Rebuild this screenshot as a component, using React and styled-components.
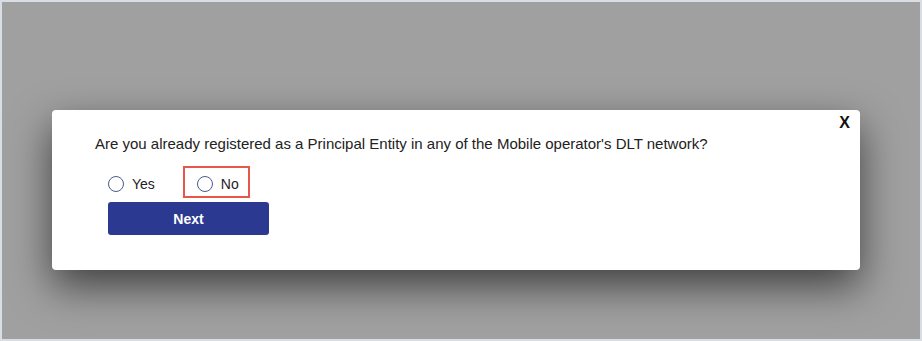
import React from 'react'
import styled, { createGlobalStyle } from 'styled-components';

const GlobalStyle = createGlobalStyle`
  html, body {
    margin: 0;
    padding: 0;
    background: #ffffff;
  }
  * { box-sizing: border-box; }
`;

const Frame = styled.div`
  width: 922px;
  height: 341px;
  border: 2px solid #d9dee4;
  background: #a0a0a0;
  padding: 108px 60px 0 50px;
  font-family: "Liberation Sans", Arial, sans-serif;
`;

const Modal = styled.div`
  position: relative;
  width: 808px;
  height: 160px;
  background: #ffffff;
  border-radius: 4px;
  box-shadow: 0 16px 40px rgba(0, 0, 0, 0.6);
  padding: 25px 0 0 43px;
`;

const Close = styled.button`
  position: absolute;
  top: 4px;
  right: 10px;
  border: none;
  background: none;
  padding: 0;
  font-family: "Liberation Sans", Arial, sans-serif;
  font-size: 16px;
  font-weight: bold;
  color: #111;
  cursor: pointer;
`;

const Question = styled.p`
  margin: 0;
  font-size: 15px;
  line-height: 17px;
  color: #222;
`;

const Options = styled.div`
  display: flex;
  align-items: center;
  margin: 14px 0 4px 11px;
`;

const Option = styled.label`
  display: flex;
  align-items: center;
  gap: 8px;
  height: 32px;
  padding: 3px ${p => (p.$highlight ? '9px' : '0')} 0 ${p => (p.$highlight ? '12px' : '0')};
  margin-right: ${p => (p.$highlight ? '0' : '26px')};
  border: 2px solid ${p => (p.$highlight ? '#e8574b' : 'transparent')};
  font-size: 14px;
  color: #222;
  cursor: pointer;
`;

const Circle = styled.span`
  width: 16px;
  height: 16px;
  border-radius: 50%;
  border: 1px solid #4d5b8c;
  background: #fff;
`;

const NextButton = styled.button`
  display: block;
  margin-left: 13px;
  width: 161px;
  height: 33px;
  border: none;
  border-radius: 3px;
  background: #2b3990;
  color: #fff;
  font-family: "Liberation Sans", Arial, sans-serif;
  font-size: 14px;
  font-weight: bold;
  cursor: pointer;
`;

const App = () => {
    return (
        <>
            <GlobalStyle />
            <Frame>
                <Modal>
                    <Close>X</Close>
                    <Question>
                        Are you already registered as a Principal Entity in any of the Mobile operator's DLT network?
                    </Question>
                    <Options>
                        <Option>
                            <Circle />
                            Yes
                        </Option>
                        <Option $highlight>
                            <Circle />
                            No
                        </Option>
                    </Options>
                    <NextButton>Next</NextButton>
                </Modal>
            </Frame>
        </>
    )
}

export default App
